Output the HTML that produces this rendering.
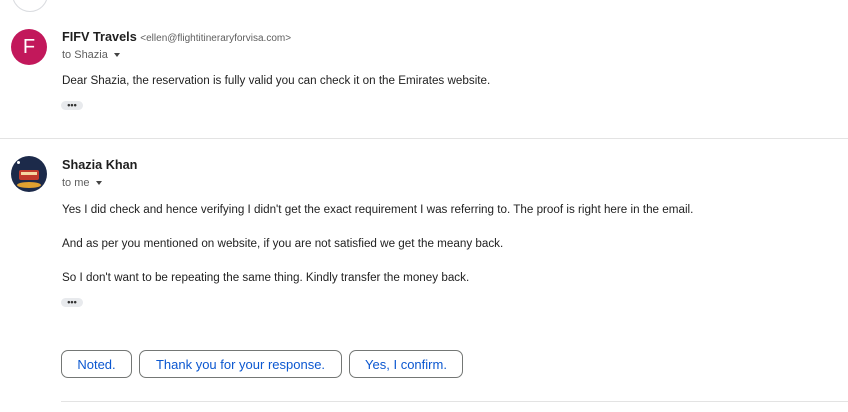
<!DOCTYPE html>
<html><head><style>
body{margin:0;width:848px;height:412px;background:#fff;font-family:"Liberation Sans",Arial,sans-serif;position:relative;overflow:hidden;color:#222}
.a{position:absolute}
.name{font-size:12.7px;font-weight:bold;color:#1f1f1f}
.small{font-size:11px;color:#5e5e5e}
.body{font-size:11.67px;color:#222}
.dots{position:absolute;width:22px;height:9px;background:#e8eaed;border-radius:5px;font-size:9px;line-height:8px;text-align:center;color:#333;font-weight:bold}
.btn{position:absolute;top:350px;height:28px;border:1px solid #747775;border-radius:7px;box-sizing:border-box;color:#0b57d0;font-size:13px;line-height:27px;text-align:center}
.caret{display:inline-block;width:0;height:0;border-left:3.5px solid transparent;border-right:3.5px solid transparent;border-top:4px solid #444;margin-left:6px;vertical-align:1px}
</style></head><body>
<div class="a" style="left:12px;top:-24px;width:34px;height:34px;border:1px solid #dadce0;border-radius:50%"></div>
<div class="a" style="left:11px;top:29px;width:36px;height:36px;border-radius:50%;background:#c2185b;color:#fff;font-size:20px;line-height:36px;text-align:center">F</div>
<div class="a name" style="left:62px;top:30px">FIFV Travels <span style="font-weight:normal;font-size:10px;color:#5e5e5e">&lt;ellen@flightitineraryforvisa.com&gt;</span></div>
<div class="a small" style="left:62px;top:49px">to Shazia<span class="caret"></span></div>
<div class="a body" style="left:62px;top:74px">Dear Shazia, the reservation is fully valid you can check it on the Emirates website.</div>
<div class="dots" style="left:61px;top:101px">•••</div>
<div class="a" style="left:0;top:138px;width:848px;height:1px;background:#e3e3e3"></div>
<div class="a" style="left:11px;top:156px;width:36px;height:36px;border-radius:50%;background:#1c2a4a;overflow:hidden">
<div class="a" style="left:8px;top:14px;width:20px;height:10px;background:#c0392b;border-radius:2px"></div>
<div class="a" style="left:10px;top:16px;width:16px;height:3px;background:#f5d6a0"></div>
<div class="a" style="left:6px;top:26px;width:24px;height:6px;background:#e0a030;border-radius:50%"></div>
<div class="a" style="left:6px;top:5px;width:3px;height:3px;background:#fff;border-radius:50%"></div>
</div>
<div class="a name" style="left:62px;top:158px">Shazia Khan</div>
<div class="a small" style="left:62px;top:177px">to me<span class="caret"></span></div>
<div class="a body" style="left:62px;top:203px">Yes I did check and hence verifying I didn't get the exact requirement I was referring to. The proof is right here in the email.</div>
<div class="a body" style="left:62px;top:237px">And as per you mentioned on website, if you are not satisfied we get the meany back.</div>
<div class="a body" style="left:62px;top:271px">So I don't want to be repeating the same thing. Kindly transfer the money back.</div>
<div class="dots" style="left:61px;top:298px">•••</div>
<div class="btn" style="left:61px;width:71px">Noted.</div>
<div class="btn" style="left:139px;width:203px">Thank you for your response.</div>
<div class="btn" style="left:349px;width:114px">Yes, I confirm.</div>
<div class="a" style="left:61px;top:401px;width:787px;height:1px;background:#e3e3e3"></div>
</body></html>
